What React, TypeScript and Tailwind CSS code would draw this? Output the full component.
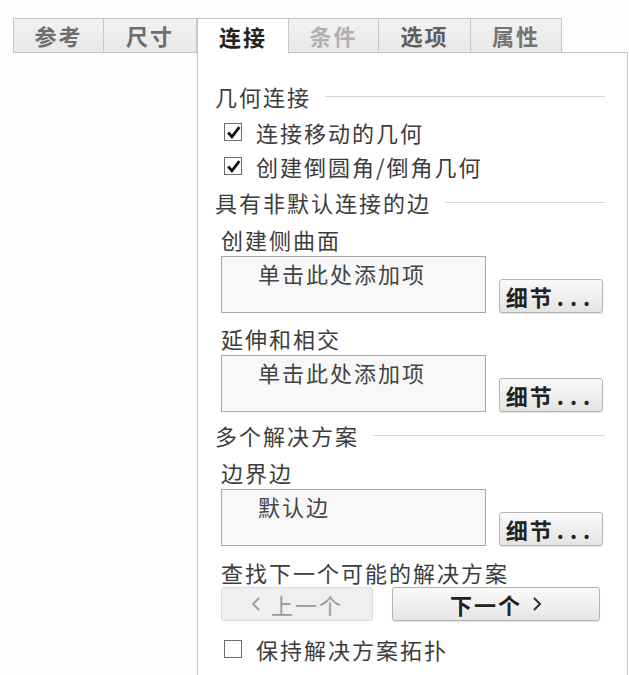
import React from 'react';

const FONT = { fontFamily: '"Noto Sans CJK SC", "Noto Sans", sans-serif' };

type TabDef = { label: string; width: string; tone: string; active?: boolean };

const tabs: TabDef[] = [
  { label: '参考', width: 'w-[91px]', tone: 'text-[#6e6e6e]' },
  { label: '尺寸', width: 'w-[93px]', tone: 'text-[#6e6e6e]' },
  { label: '连接', width: 'w-[92px]', tone: 'text-[#222]', active: true },
  { label: '条件', width: 'w-[90px]', tone: 'text-[#b0b0b0]' },
  { label: '选项', width: 'w-[92px]', tone: 'text-[#5e5e5e]' },
  { label: '属性', width: 'w-[91px]', tone: 'text-[#747474]' },
];

function CheckBox({ checked }: { checked?: boolean }) {
  return (
    <div className="w-[18px] h-[18px] border border-[#6a6a6a] bg-white flex items-center justify-center shrink-0">
      {checked && (
        <svg width="15" height="15" viewBox="0 0 14 14">
          <path d="M2 7 L5.5 11 L12.5 2" fill="none" stroke="#111" strokeWidth="2.6" />
        </svg>
      )}
    </div>
  );
}

// 分组标题 + 右侧细线
function GroupTitle({ text, className = '' }: { text: string; className?: string }) {
  return (
    <div className={`h-[34px] flex items-center pl-[17px] pr-[22px] ${className}`}>
      <span className="text-[#3c3c3c]">{text}</span>
      <div className="flex-1 h-px bg-[#d6d6d6] ml-[14px]" />
    </div>
  );
}

function Label({ text, className = '' }: { text: string; className?: string }) {
  return <div className={`h-[34px] flex items-center pl-[23px] text-[#3c3c3c] ${className}`}>{text}</div>;
}

function DetailButton() {
  return (
    <button className="w-[104px] h-[34px] rounded-[3px] border border-[#b4b4b4] bg-gradient-to-b from-[#fafafa] to-[#e4e4e4] font-bold text-[#222] flex items-center justify-center shadow-[0_1px_1px_rgba(0,0,0,0.12)]">
      细节<span className="tracking-[6px] ml-[3px]">...</span>
    </button>
  );
}

function ListBox({ text, className = '' }: { text: string; className?: string }) {
  return (
    <div className={`flex items-end gap-[13px] pl-[23px] ${className}`}>
      <div className="w-[265px] h-[57px] border border-[#a8a8a8] bg-[#f8f8f8] pl-[36px] pt-[2px] leading-[28px] text-[#444]">
        {text}
      </div>
      <DetailButton />
    </div>
  );
}

export default function App() {
  return (
    <div className="w-[629px] h-[675px] bg-[#fdfdfd] overflow-hidden pt-[18px] pl-[13px] text-[22px] tracking-[2px]" style={FONT}>
      {/* 标签栏 */}
      <div className="flex h-[35px] w-[615px]">
        {tabs.map((t, i) => (
          <div
            key={t.label}
            className={`${t.width} h-full flex items-center justify-center font-bold border-t border-[#c6c6c6] ${t.tone} ${
              i === 0 ? 'border-l' : ''
            } ${t.active ? 'bg-white border-l border-r' : 'bg-gradient-to-b from-[#f2f2f2] to-[#e8e8e8] border-b border-r'}`}
          >
            {t.label}
          </div>
        ))}
        <div className="flex-1 border-b border-[#c6c6c6]" />
      </div>

      <div className="flex h-[622px]">
        <div className="w-[184px] shrink-0" />
        {/* 连接 面板 */}
        <div className="w-[431px] h-full bg-white border-l border-r border-[#c6c6c6] pt-[26px]">
          <GroupTitle text="几何连接" />
          <div className="h-[34px] flex items-center gap-[14px] pl-[26px] mt-[2px] text-[#3c3c3c]">
            <CheckBox checked />
            连接移动的几何
          </div>
          <div className="h-[34px] flex items-center gap-[14px] pl-[26px] text-[#3c3c3c]">
            <CheckBox checked />
            创建倒圆角/倒角几何
          </div>
          <GroupTitle text="具有非默认连接的边" className="mt-[2px]" />
          <Label text="创建侧曲面" className="mt-[3px]" />
          <ListBox text="单击此处添加项" />
          <Label text="延伸和相交" className="mt-[8px]" />
          <ListBox text="单击此处添加项" />
          <GroupTitle text="多个解决方案" className="mt-[6px]" />
          <Label text="边界边" className="mt-[3px]" />
          <ListBox text="默认边" />
          <Label text="查找下一个可能的解决方案" className="mt-[9px]" />
          <div className="flex gap-[19px] pl-[23px] mt-[-2px]">
            <button className="w-[152px] h-[34px] rounded-[3px] border border-[#dcdcdc] bg-[#efefef] text-[#9a9a9a] flex items-center justify-center gap-[10px]">
              <svg width="10" height="16" viewBox="0 0 10 16">
                <path d="M8 2 L2 8 L8 14" fill="none" stroke="#9a9a9a" strokeWidth="1.8" />
              </svg>
              上一个
            </button>
            <button className="w-[208px] h-[34px] rounded-[3px] border border-[#b4b4b4] bg-gradient-to-b from-[#fafafa] to-[#e6e6e6] text-[#222] font-bold flex items-center justify-center gap-[10px] shadow-[0_1px_1px_rgba(0,0,0,0.12)]">
              下一个
              <svg width="10" height="16" viewBox="0 0 10 16">
                <path d="M2 2 L8 8 L2 14" fill="none" stroke="#333" strokeWidth="2" />
              </svg>
            </button>
          </div>
          <div className="h-[34px] flex items-center gap-[14px] pl-[26px] mt-[11px] text-[#3c3c3c]">
            <CheckBox />
            保持解决方案拓扑
          </div>
        </div>
      </div>
    </div>
  );
}
